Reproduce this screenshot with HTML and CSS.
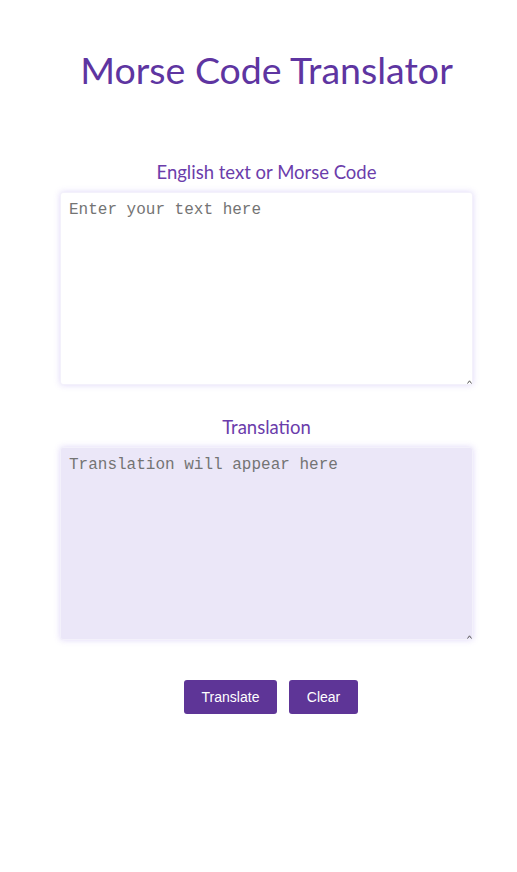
FILE: index.html
```html
<!DOCTYPE html>
<html>
<head>
<meta charset="utf-8">
<title>Morse Code Translator</title>
<link rel="stylesheet" href="styles.css">
</head>
<body>
<main class="page">
  <h1 class="title">Morse Code Translator</h1>
  <section class="field">
    <label class="label" for="input">English text or Morse Code</label>
    <div class="box-wrap">
      <textarea id="input" class="box" placeholder="Enter your text here"></textarea>
      <svg class="grip" width="5" height="4" viewBox="0 0 5 4"><path d="M0.5 3.5 L2.5 0.8 L4.5 3.5" fill="none" stroke="#555" stroke-width="1"/></svg>
    </div>
  </section>
  <section class="field">
    <label class="label" for="output">Translation</label>
    <div class="box-wrap">
      <textarea id="output" class="box box-out" placeholder="Translation will appear here" readonly></textarea>
      <svg class="grip" width="5" height="4" viewBox="0 0 5 4"><path d="M0.5 3.5 L2.5 0.8 L4.5 3.5" fill="none" stroke="#555" stroke-width="1"/></svg>
    </div>
  </section>
  <div class="actions">
    <button class="btn btn-translate">Translate</button>
    <button class="btn btn-clear">Clear</button>
  </div>
</main>
</body>
</html>
```
FILE: styles.css
```css
html, body {
  margin: 0;
  padding: 0;
  background: #ffffff;
}
.page {
  padding: 0 0 0 16px;
  display: flex;
  flex-direction: column;
  align-items: center;
  font-family: "Lato", "Noto Sans", sans-serif;
}
.title {
  margin: 48px 0 0 0;
  font-size: 37.5px;
  font-weight: 400;
  color: #5e35a1;
  line-height: 44px;
}
.field {
  display: flex;
  flex-direction: column;
  align-items: center;
}
.field:first-of-type {
  margin-top: 68px;
}
.field + .field {
  margin-top: 30px;
}
.label {
  font-size: 18.5px;
  color: #6b3dab;
  line-height: 24px;
  margin-bottom: 8px;
}
.box-wrap {
  position: relative;
  width: 413px;
  height: 193px;
}
.box {
  display: block;
  box-sizing: border-box;
  width: 413px;
  height: 193px;
  margin: 0;
  border: 1px solid #f3f1fb;
  border-radius: 3px;
  background: #ffffff;
  box-shadow: 0 0 6px rgba(140, 110, 230, 0.28);
  padding: 8px;
  font-family: "Liberation Mono", monospace;
  font-size: 16px;
  color: #333;
  resize: none;
  outline: none;
}
.box::placeholder {
  color: #747474;
}
.box-out {
  background: #ebe7f8;
}
.grip {
  position: absolute;
  right: 1px;
  bottom: 1px;
}
.actions {
  display: flex;
  gap: 12px;
  margin-top: 40px;
  padding-left: 9px;
}
.btn {
  height: 34px;
  border: none;
  border-radius: 3px;
  background: #5e3597;
  color: #ffffff;
  font-family: "Liberation Sans", Arial, sans-serif;
  font-size: 14px;
  padding: 0 17px;
}
.btn-translate {
  width: 93px;
}
.btn-clear {
  width: 69px;
}
```
